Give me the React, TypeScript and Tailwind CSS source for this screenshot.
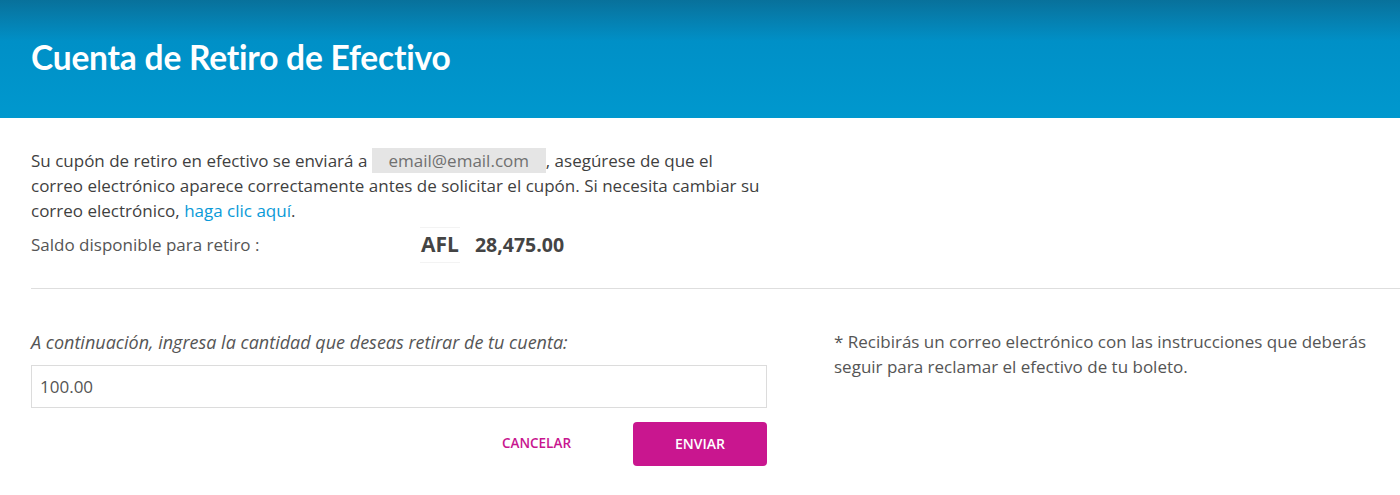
import React from "react";

export default function App() {
  return (
    <div className="min-h-[495px] w-[1400px] bg-white font-['Open_Sans',sans-serif] text-[#444]">
      <header className="flex h-[118px] items-center bg-linear-to-b from-[#08719b] via-[#0090c7] via-35% to-[#0098ce] px-[31px] pb-[4px]">
        <h1 className="font-['Lato',sans-serif] text-[33.5px] font-bold tracking-[-0.2px] text-white">
          Cuenta de Retiro de Efectivo
        </h1>
      </header>

      <section className="px-[31px] pt-[30px]">
        <p className="w-[760px] text-[17px] leading-[25px] text-[#3f3f3f]">
          Su cupón de retiro en efectivo se enviará a{" "}
          <span className="inline-block h-[25px] w-[174px] bg-[#e5e5e5] text-center align-top leading-[25px] text-[#707070]">
            email@email.com
          </span>
          , asegúrese de que el
          <br />
          correo electrónico aparece correctamente antes de solicitar el cupón. Si necesita cambiar su
          <br />
          correo electrónico,{" "}
          <a className="text-[#0a9ad8]" href="#">
            haga clic aquí
          </a>
          .
        </p>
        <div className="mt-[4px] flex items-center">
          <span className="w-[389px] text-[17px] text-[#555]">Saldo disponible para retiro :</span>
          <span className="border-y border-[#f3f3f3] px-[1px] py-[1px] text-[21px] font-bold text-[#444]">AFL</span>
          <span className="ml-[15px] text-[19.5px] font-bold text-[#444]">28,475.00</span>
        </div>
      </section>

      <div className="ml-[31px] mt-[25px] border-t border-[#dedede]" />

      <section className="flex pl-[31px] pt-[40px]">
        <div className="w-[736px] shrink-0">
          <p className="text-[18px] italic leading-[26px] text-[#555]">
            A continuación, ingresa la cantidad que deseas retirar de tu cuenta:
          </p>
          <input
            className="mt-[10px] h-[43px] w-full border border-[#dcdcdc] px-[8px] text-[17px] text-[#555] outline-none"
            defaultValue="100.00"
          />
          <div className="mt-[14px] flex items-center justify-end gap-[62px]">
            <button className="text-[13.5px] font-semibold text-[#c8168f]">CANCELAR</button>
            <button className="h-[44px] w-[134px] rounded-[4px] bg-[#c9168f] text-[14px] font-semibold text-white">
              ENVIAR
            </button>
          </div>
        </div>
        <p className="ml-[67px] w-[560px] text-[17px] leading-[25px] text-[#555]">
          * Recibirás un correo electrónico con las instrucciones que deberás
          <br />
          seguir para reclamar el efectivo de tu boleto.
        </p>
      </section>
    </div>
  );
}
